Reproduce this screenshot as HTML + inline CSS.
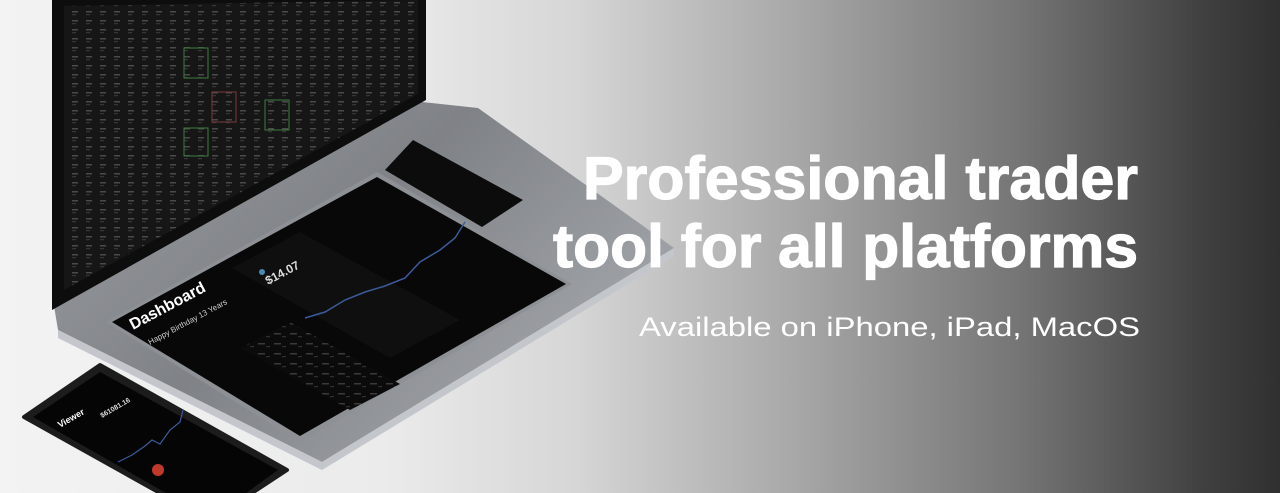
<!DOCTYPE html>
<html><head><meta charset="utf-8"><style>
html,body{margin:0;padding:0}
body{width:1280px;height:493px;overflow:hidden;position:relative;
background:linear-gradient(90deg,#f3f3f3 0%,#ebebeb 30%,#d6d6d6 45%,#a8a8a8 62%,#747474 80%,#404040 94%,#303030 100%);
font-family:"Liberation Sans",sans-serif}
svg{position:absolute;left:0;top:0}
</style></head><body>
<svg width="1280" height="493" viewBox="0 0 1280 493">
<defs>
<linearGradient id="base" x1="0" y1="0" x2="1" y2="0.6">
<stop offset="0" stop-color="#9a9da1"/><stop offset="0.5" stop-color="#7f8286"/><stop offset="1" stop-color="#a3a6aa"/>
</linearGradient>
<pattern id="grid" width="14" height="9" patternUnits="userSpaceOnUse">
<rect width="14" height="9" fill="#161616"/>
<rect x="2" y="2" width="6" height="1.5" fill="#4a4a4a"/>
<rect x="2" y="5" width="4" height="1.2" fill="#3a3535"/>
</pattern>
<pattern id="grid2" width="16" height="10" patternUnits="userSpaceOnUse">
<rect width="16" height="10" fill="#0b0b0b"/>
<rect x="2" y="3" width="7" height="1.5" fill="#3a3a3a"/>
<rect x="10" y="6" width="4" height="1.2" fill="#3a2a2a"/>
</pattern>
</defs>
<polygon points="54,306 422,102 478,108 674,248 322,462 58,330" fill="url(#base)"/>
<polygon points="58,330 322,462 674,248 674,256 322,470 58,338" fill="#c3c6ca"/>
<polygon points="52,0 426,0 426,100 52,310" fill="#0d0d0d"/>
<polygon points="64,6 418,0 418,94 64,290" fill="url(#grid)"/>
<rect x="184" y="48" width="24" height="30" fill="none" stroke="#3f7a3f"/>
<rect x="212" y="92" width="24" height="30" fill="none" stroke="#7a3a3a"/>
<rect x="265" y="100" width="24" height="30" fill="none" stroke="#3f7a3f"/>
<rect x="184" y="128" width="24" height="28" fill="none" stroke="#3f7a3f"/>
<polygon points="385,170 413,140 523,200 482,227" fill="#0c0c0c"/>
<polygon points="106,322 377,172 572,284 300,442" fill="#8d9094"/>
<polygon points="112,322 377,177 566,284 300,436" fill="#080808"/>
<polygon points="232,268 300,232 460,320 390,358" fill="#0f0f0f"/>
<polygon points="240,348 290,322 400,384 350,410" fill="url(#grid2)"/>
<polyline points="305,318 325,312 345,300 365,292 385,286 405,278 420,262 440,250 455,238 465,222" fill="none" stroke="#3b5b9a" stroke-width="1.5"/>
<text x="0" y="0" font-size="16" font-weight="bold" fill="#fff" transform="translate(133,330) rotate(-28)">Dashboard</text>
<text x="0" y="0" font-size="8" fill="#ccc" transform="translate(150,345) rotate(-28)">Happy Birthday 13 Years</text>
<text x="0" y="0" font-size="12" font-weight="bold" fill="#ddd" transform="translate(268,285) rotate(-28)">$14.07</text>
<circle cx="262" cy="272" r="3" fill="#4a8ab5"/>
<polygon points="24,417 100,365 287,470 252,493 160,493" fill="#1c1c1c" stroke="#1c1c1c" stroke-width="4" stroke-linejoin="round"/>
<polygon points="33,417 100,372 278,470 246,493 166,493" fill="#050505"/>
<polyline points="118,462 132,455 145,446 152,440 160,444 170,430 180,422 183,410" fill="none" stroke="#3b5b9a" stroke-width="1.2"/>
<circle cx="158" cy="470" r="6" fill="#c0392b"/>
<text x="0" y="0" font-size="9" font-weight="bold" fill="#fff" transform="translate(60,428) rotate(-30)">Viewer</text>
<text x="0" y="0" font-size="7" font-weight="bold" fill="#ddd" transform="translate(102,418) rotate(-30)">$61081.16</text>
<text x="1138" y="199" text-anchor="end" font-size="60" font-weight="bold" fill="#fff" stroke="#fff" stroke-width="1.2" textLength="555" lengthAdjust="spacingAndGlyphs">Professional trader</text>
<text x="1138" y="267" text-anchor="end" font-size="60" font-weight="bold" fill="#fff" stroke="#fff" stroke-width="1.2" textLength="585" lengthAdjust="spacingAndGlyphs">tool for all platforms</text>
<text x="1140" y="336" text-anchor="end" font-size="27" fill="#fff" textLength="501" lengthAdjust="spacingAndGlyphs">Available on iPhone, iPad, MacOS</text>
</svg>
</body></html>
